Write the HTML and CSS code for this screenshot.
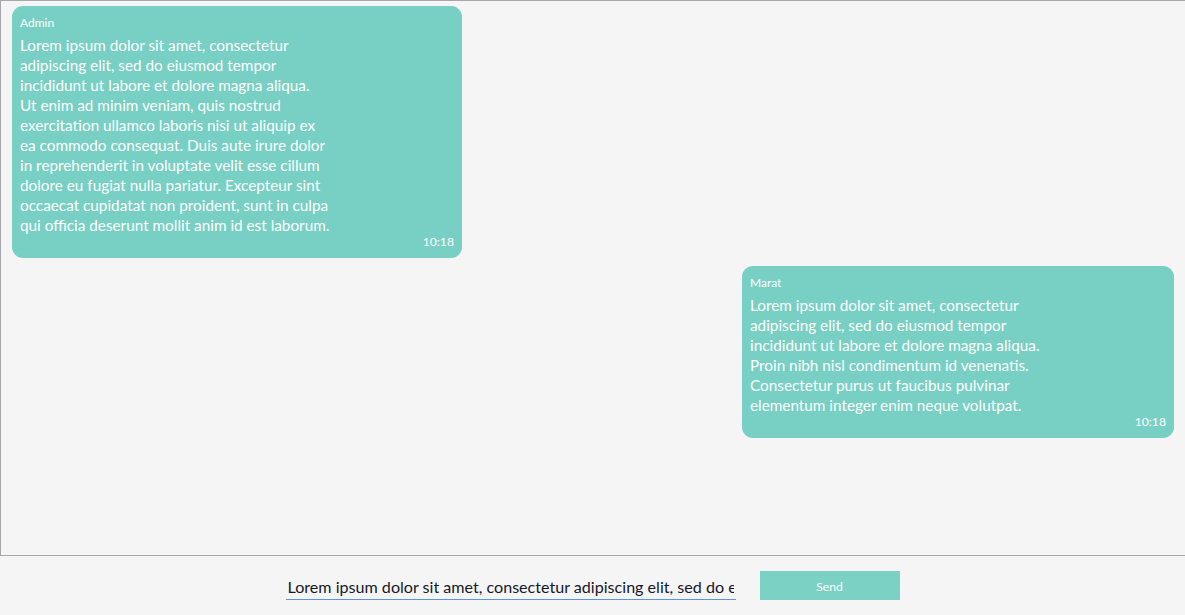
FILE: index.html
```html
<!DOCTYPE html>
<html lang="en">
<head>
<meta charset="utf-8">
<title>Chat</title>
<link rel="stylesheet" href="styles.css">
</head>
<body>
<div class="app">
  <div class="chat">
    <div class="msg msg-left">
      <div class="name">Admin</div>
      <div class="text">Lorem ipsum dolor sit amet, consectetur<br>adipiscing elit, sed do eiusmod tempor<br>incididunt ut labore et dolore magna aliqua.<br>Ut enim ad minim veniam, quis nostrud<br>exercitation ullamco laboris nisi ut aliquip ex<br>ea commodo consequat. Duis aute irure dolor<br>in reprehenderit in voluptate velit esse cillum<br>dolore eu fugiat nulla pariatur. Excepteur sint<br>occaecat cupidatat non proident, sunt in culpa<br>qui officia deserunt mollit anim id est laborum.</div>
      <div class="time">10:18</div>
    </div>
    <div class="msg msg-right">
      <div class="name">Marat</div>
      <div class="text">Lorem ipsum dolor sit amet, consectetur<br>adipiscing elit, sed do eiusmod tempor<br>incididunt ut labore et dolore magna aliqua.<br>Proin nibh nisl condimentum id venenatis.<br>Consectetur purus ut faucibus pulvinar<br>elementum integer enim neque volutpat.</div>
      <div class="time">10:18</div>
    </div>
  </div>
  <div class="composer">
    <input class="field" type="text" value="Lorem ipsum dolor sit amet, consectetur adipiscing elit, sed do eiusmod tempor">
    <button class="send" type="button">Send</button>
  </div>
</div>
</body>
</html>
```
FILE: styles.css
```css
* { box-sizing: border-box; }
html, body { margin: 0; padding: 0; }
body {
  background: #f5f5f5;
  font-family: Lato, "Open Sans", sans-serif;
  width: 1185px;
  height: 615px;
  overflow: hidden;
}
.app {
  display: flex;
  flex-direction: column;
  height: 615px;
}
.chat {
  height: 556px;
  border: 1px solid #a7a7ab;
  border-right: none;
  padding: 5px 11px;
  display: flex;
  flex-direction: column;
  gap: 8px;
}
.msg {
  background: #77d0c3;
  color: #ffffff;
  border-radius: 11px;
  padding: 9px 8px 9px 8px;
  display: flex;
  flex-direction: column;
}
.msg-left { width: 450px; align-self: flex-start; }
.msg-right { width: 432px; align-self: flex-end; }
.name {
  font-size: 12px;
  line-height: 16px;
}
.text {
  margin-top: 4px;
  font-size: 15.3px;
  line-height: 20px;
  white-space: nowrap;
}
.time {
  font-size: 12.2px;
  line-height: 14px;
  text-align: right;
}
.composer {
  flex: 1;
  display: flex;
  justify-content: center;
  align-items: flex-start;
  gap: 24px;
  padding-top: 15px;
}
.field {
  width: 450px;
  height: 29px;
  border: none;
  border-bottom: 1px solid #5f95d6;
  background: transparent;
  font-family: Lato, "Open Sans", sans-serif;
  font-size: 16.1px;
  color: #16182a;
  padding: 2px 2px 0 2px;
  outline: none;
}
.send {
  width: 140px;
  height: 29px;
  border: none;
  background: #7ad1c4;
  color: #ffffff;
  font-family: Lato, "Open Sans", sans-serif;
  font-size: 12.2px;
  padding: 2px 0 0 0;
}
```
